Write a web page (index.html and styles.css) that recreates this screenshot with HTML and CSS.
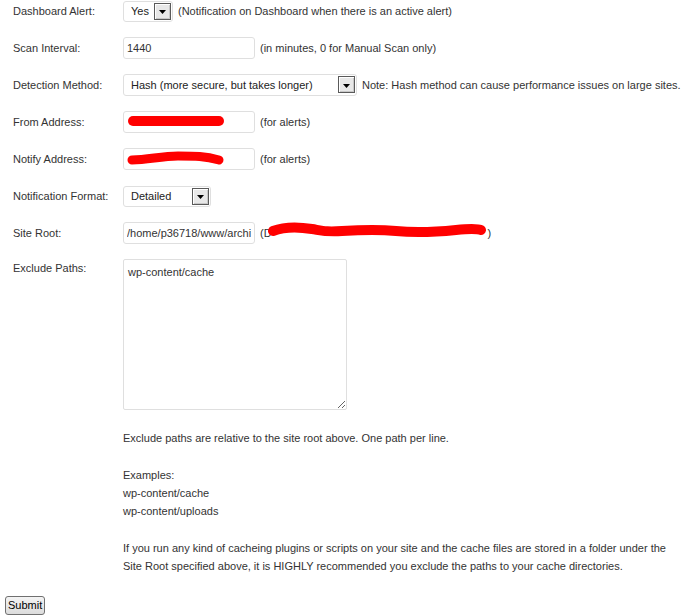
FILE: index.html
```html
<!DOCTYPE html>
<html>
<head>
<meta charset="utf-8">
<link rel="stylesheet" href="styles.css">
</head>
<body>
<form class="settings">
  <div class="row">
    <label class="lbl">Dashboard Alert:</label>
    <div class="ctl">
      <span class="select-wrap w-yes">
        <select class="select"><option>Yes</option><option>No</option></select>
        <span class="arrow"><svg width="7" height="4" viewBox="0 0 7 4"><polygon points="0,0 7,0 3.5,4" fill="#000"/></svg></span>
      </span>
      <span class="hint">(Notification on Dashboard when there is an active alert)</span>
    </div>
  </div>
  <div class="row">
    <label class="lbl">Scan Interval:</label>
    <div class="ctl">
      <input class="text" type="text" value="1440">
      <span class="hint">(in minutes, 0 for Manual Scan only)</span>
    </div>
  </div>
  <div class="row">
    <label class="lbl">Detection Method:</label>
    <div class="ctl">
      <span class="select-wrap w-method">
        <select class="select"><option>Hash (more secure, but takes longer)</option></select>
        <span class="arrow"><svg width="7" height="4" viewBox="0 0 7 4"><polygon points="0,0 7,0 3.5,4" fill="#000"/></svg></span>
      </span>
      <span class="hint">Note: Hash method can cause performance issues on large sites.</span>
    </div>
  </div>
  <div class="row">
    <label class="lbl">From Address:</label>
    <div class="ctl">
      <span class="input-wrap">
        <input class="text" type="text" value="">
        <svg class="scribble" width="132" height="22" viewBox="0 0 132 22"><path d="M10 10 L96 10" stroke="#ff0000" stroke-width="10" stroke-linecap="round" fill="none"/></svg>
      </span>
      <span class="hint">(for alerts)</span>
    </div>
  </div>
  <div class="row">
    <label class="lbl">Notify Address:</label>
    <div class="ctl">
      <span class="input-wrap">
        <input class="text" type="text" value="">
        <svg class="scribble" width="132" height="22" viewBox="0 0 132 22"><path d="M9 12 C25 12, 38 8, 55 8 S 82 8, 96 12" stroke="#ff0000" stroke-width="9" stroke-linecap="round" fill="none"/></svg>
      </span>
      <span class="hint">(for alerts)</span>
    </div>
  </div>
  <div class="row">
    <label class="lbl">Notification Format:</label>
    <div class="ctl">
      <span class="select-wrap w-format">
        <select class="select"><option>Detailed</option><option>Summary</option></select>
        <span class="arrow"><svg width="7" height="4" viewBox="0 0 7 4"><polygon points="0,0 7,0 3.5,4" fill="#000"/></svg></span>
      </span>
    </div>
  </div>
  <div class="row">
    <label class="lbl">Site Root:</label>
    <div class="ctl">
      <input class="text" type="text" value="/home/p36718/www/archive">
      <span class="hint">(D<svg class="redact" width="224" height="22" viewBox="0 0 224 22"><path d="M9 9 C22 4, 36 5, 48 7 S 62 10, 78 9 S 112 7, 132 9 S 172 10, 192 8 S 210 7, 217 8" stroke="#ff0000" stroke-width="10" stroke-linecap="round" fill="none"/></svg>)</span>
    </div>
  </div>
  <div class="row row-top">
    <label class="lbl">Exclude Paths:</label>
    <div class="ctl">
      <textarea class="area">wp-content/cache</textarea>
    </div>
  </div>
  <div class="help">
    <p>Exclude paths are relative to the site root above. One path per line.</p>
    <p>Examples:<br>wp-content/cache<br>wp-content/uploads</p>
    <p>If you run any kind of cacheing plugins or scripts on your site and the cache files are stored in a folder under the Site Root specified above, it is HIGHLY recommended you exclude the paths to your cache directories.</p>
  </div>
  <button class="submit" type="button">Submit</button>
</form>
</body>
</html>
```
FILE: styles.css
```css
html, body {
  margin: 0;
  padding: 0;
  background: #ffffff;
}

body {
  font-family: "Liberation Sans", Arial, sans-serif;
  font-size: 11px;
  color: #333333;
}

.settings {
  padding: 0 0 0 5px;
}

.row {
  display: flex;
  align-items: center;
  height: 22px;
  margin-bottom: 15px;
}

.lbl {
  flex: none;
  box-sizing: border-box;
  width: 118px;
  padding-left: 8px;
  line-height: 18px;
}

.ctl {
  display: flex;
  align-items: center;
  gap: 5px;
}

.hint {
  white-space: nowrap;
  display: inline-flex;
  align-items: center;
}

.text {
  box-sizing: border-box;
  width: 132px;
  height: 22px;
  margin: 0;
  padding: 0 3px;
  border: 1px solid #dfdfdf;
  border-radius: 3px;
  background: #ffffff;
  font-family: "Liberation Sans", Arial, sans-serif;
  font-size: 11px;
  color: #333333;
  outline: none;
}

.input-wrap {
  position: relative;
  display: inline-block;
  height: 22px;
}

.scribble {
  position: absolute;
  left: 0;
  top: 0;
}

.redact {
  display: block;
  margin-left: -8px;
}

.select-wrap {
  position: relative;
  display: inline-block;
  height: 22px;
}

.select {
  -webkit-appearance: none;
  appearance: none;
  box-sizing: border-box;
  height: 22px;
  width: 100%;
  margin: 0;
  padding: 0 20px 0 7px;
  border: 1px solid #dfdfdf;
  border-radius: 3px;
  background: #ffffff;
  font-family: "Liberation Sans", Arial, sans-serif;
  font-size: 11px;
  color: #222222;
  outline: none;
}

.w-yes { width: 50px; height: 21px; }
.w-yes .select { height: 21px; }
.w-method { width: 234px; }
.w-format { width: 88px; height: 21px; }
.w-format .select { height: 21px; }

.arrow {
  position: absolute;
  right: 2px;
  top: 2px;
  box-sizing: border-box;
  width: 17px;
  height: 17px;
  border: 1px solid #5a5a5a;
  box-shadow: inset 1px 1px 0 #ffffff, inset -1px -1px 0 #c8c8c8;
  background: #e8e8e8;
  display: flex;
  align-items: center;
  justify-content: center;
  padding-top: 2px;
  pointer-events: none;
}

.arrow svg {
  display: block;
}

.row-top {
  height: auto;
  align-items: flex-start;
  margin-bottom: 0;
}

.area {
  display: block;
  box-sizing: border-box;
  width: 224px;
  height: 151px;
  margin: 0;
  padding: 3px 4px;
  border: 1px solid #dfdfdf;
  border-radius: 2px;
  font-family: "Liberation Sans", Arial, sans-serif;
  font-size: 11px;
  line-height: 18px;
  color: #333333;
  background: #ffffff;
  outline: none;
}

.help {
  margin: 19px 0 0 118px;
  width: 560px;
  line-height: 18px;
}

.help p {
  margin: 0 0 19px;
}

.help p:last-child {
  margin-bottom: 0;
}

.submit {
  display: block;
  margin: 21px 0 0 0;
  box-sizing: border-box;
  height: 19px;
  padding: 0 2px;
  border: 1px solid #707070;
  border-radius: 3px;
  background: linear-gradient(#f4f4f4, #dcdcdc);
  font-family: "Liberation Sans", Arial, sans-serif;
  font-size: 11px;
  color: #000000;
  line-height: 15px;
}
```
